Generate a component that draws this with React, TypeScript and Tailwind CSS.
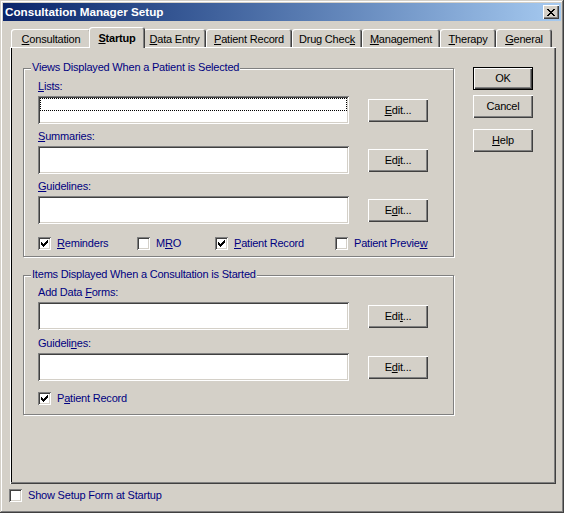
import type { ReactNode } from "react";

// classic win2000 bevels
const raised = "shadow-[inset_1px_1px_#fff,inset_-1px_-1px_#404040,inset_-2px_-2px_#808080]";
const sunken =
  "shadow-[inset_1px_1px_#808080,inset_-1px_-1px_#fff,inset_2px_2px_#404040,inset_-2px_-2px_#d4d0c8]";

function CheckMark() {
  return (
    <svg width="13" height="13" viewBox="0 0 13 13" shapeRendering="crispEdges" className="block">
      <path
        fill="#000"
        d="M3 5h1v3H3zM4 6h1v3H4zM5 7h1v3H5zM6 6h1v3H6zM7 5h1v3H7zM8 4h1v3H8zM9 3h1v3H9z"
      />
    </svg>
  );
}

function CheckBox({ checked, children, className = "" }: { checked?: boolean; children: ReactNode; className?: string }) {
  return (
    <div className={`flex items-center gap-[6px] ${className}`}>
      <span className={`flex h-[13px] w-[13px] shrink-0 bg-white ${sunken}`}>{checked && <CheckMark />}</span>
      <span className="leading-[13px] text-[#000080]">{children}</span>
    </div>
  );
}

function Btn({ children, isDefault }: { children: ReactNode; isDefault?: boolean }) {
  return (
    <button
      className={
        isDefault
          ? "flex h-[23px] w-[60px] items-center justify-center border border-black bg-[#d4d0c8] text-black shadow-[inset_1px_1px_#fff,inset_-1px_-1px_#404040,inset_-2px_-2px_#808080]"
          : `flex h-[23px] w-[60px] items-center justify-center bg-[#d4d0c8] text-black ${raised}`
      }
    >
      {children}
    </button>
  );
}

function Field({ label, focus, className = "", edit }: { label: ReactNode; focus?: boolean; className?: string; edit: ReactNode }) {
  return (
    <div className={`flex flex-col ${className}`}>
      <div className="h-[13px] leading-[13px] text-[#000080]">{label}</div>
      <div className="mt-[3px] flex items-center">
        <div className={`h-[28px] w-[311px] bg-white p-[2px] ${sunken}`}>
          {focus && <div className="h-[13px] border border-dotted border-black" />}
        </div>
        <div className="ml-[19px]">
          <Btn>{edit}</Btn>
        </div>
      </div>
    </div>
  );
}

function Group({ title, children, className = "" }: { title: string; children: ReactNode; className?: string }) {
  return (
    <div
      className={`relative w-[431px] border border-[#808080] shadow-[1px_1px_0_#fff,inset_1px_1px_0_#fff] ${className}`}
    >
      <span className="absolute -top-[8px] left-[7px] bg-[#d4d0c8] px-[1px] leading-[13px] text-[#000080]">
        {title}
      </span>
      {children}
    </div>
  );
}

const tabs: { w: string; label: ReactNode; selected?: boolean }[] = [
  { w: "w-[80px]", label: <><u>C</u>onsultation</> },
  { w: "w-[56px]", label: <><u>S</u>tartup</>, selected: true },
  { w: "w-[63px]", label: <><u>D</u>ata Entry</> },
  { w: "w-[86px]", label: <><u>P</u>atient Record</> },
  { w: "w-[70px]", label: <>Drug Chec<u>k</u></> },
  { w: "w-[78px]", label: <><u>M</u>anagement</> },
  { w: "w-[56px]", label: <><u>T</u>herapy</> },
  { w: "w-[56px]", label: <><u>G</u>eneral</> },
];

export default function App() {
  return (
    <div
      className="flex h-[513px] w-[564px] flex-col bg-[#d4d0c8] p-[3px] text-[11px] tracking-[-0.2px] text-black shadow-[inset_-1px_-1px_#404040,inset_1px_1px_#d4d0c8,inset_-2px_-2px_#808080,inset_2px_2px_#fff]"
      style={{ fontFamily: '"Liberation Sans", Arial, sans-serif' }}
    >
      {/* title bar */}
      <div className="flex h-[18px] items-center justify-between bg-linear-to-r from-[#0a246a] to-[#a6caf0] pl-[2px] pr-[2px]">
        <span className="text-[11.7px] font-bold tracking-normal text-white">Consultation Manager Setup</span>
        <button className={`flex h-[14px] w-[16px] items-center justify-center bg-[#d4d0c8] ${raised}`}>
          <svg width="8" height="7" viewBox="0 0 8 7" shapeRendering="crispEdges" className="block">
            <path
              fill="#000"
              d="M0 0h2v1H0zM6 0h2v1H6zM1 1h2v1H1zM5 1h2v1H5zM2 2h4v1H2zM3 3h2v1H3zM2 4h4v1H2zM1 5h2v1H1zM5 5h2v1H5zM0 6h2v1H0zM6 6h2v1H6z"
            />
          </svg>
        </button>
      </div>

      {/* tabs */}
      <div className="ml-[8px] mt-[6px] flex h-[20px] items-end">
        {tabs.map((t, i) =>
          t.selected ? (
            <div
              key={i}
              className={`relative z-10 -mx-[2px] -mb-[1px] flex h-[21px] ${t.w} shrink-0 items-start justify-center rounded-t-[3px] bg-[#d4d0c8] pt-[3px] font-bold shadow-[inset_1px_1px_#fff,inset_-1px_0_#404040,inset_-2px_0_#808080]`}
            >
              {t.label}
            </div>
          ) : (
            <div
              key={i}
              className={`flex h-[18px] ${t.w} shrink-0 items-start justify-center rounded-t-[3px] bg-[#d4d0c8] pt-[2px] shadow-[inset_1px_1px_#fff,inset_-1px_0_#404040,inset_-2px_0_#808080]`}
            >
              {t.label}
            </div>
          )
        )}
      </div>

      {/* page */}
      <div className="ml-[7px] flex h-[437px] w-[546px] pl-[13px] pt-[20px] shadow-[inset_1px_1px_#fff,inset_-1px_-1px_#404040,inset_-2px_-2px_#808080,inset_2px_0_#000]">
        <div className="flex flex-col">
          <Group title="Views Displayed When a Patient is Selected" className="mt-[1px] pb-[6px] pl-[14px] pt-[11px]">
            <Field label={<><u>L</u>ists:</>} focus edit={<><u>E</u>dit...</>} />
            <Field label={<><u>S</u>ummaries:</>} className="mt-[6px]" edit={<>Ed<u>i</u>t...</>} />
            <Field label={<><u>G</u>uidelines:</>} className="mt-[6px]" edit={<>E<u>d</u>it...</>} />
            <div className="mt-[13px] flex">
              <CheckBox checked className="w-[99px]">
                <u>R</u>eminders
              </CheckBox>
              <CheckBox className="w-[78px]">
                M<u>R</u>O
              </CheckBox>
              <CheckBox checked className="w-[120px]">
                <u>P</u>atient Record
              </CheckBox>
              <CheckBox>
                Patient Previe<u>w</u>
              </CheckBox>
            </div>
          </Group>

          <Group title="Items Displayed When a Consultation is Started" className="mt-[18px] pb-[9px] pl-[14px] pt-[10px]">
            <Field label={<>Add Data <u>F</u>orms:</>} edit={<>Edi<u>t</u>...</>} />
            <Field label={<>Guideli<u>n</u>es:</>} className="mt-[7px]" edit={<>E<u>d</u>it...</>} />
            <CheckBox checked className="mt-[11px]">
              P<u>a</u>tient Record
            </CheckBox>
          </Group>
        </div>

        <div className="ml-[19px] flex flex-col">
          <Btn isDefault>OK</Btn>
          <div className="mt-[5px]">
            <Btn>Cancel</Btn>
          </div>
          <div className="mt-[11px]">
            <Btn>
              <u>H</u>elp
            </Btn>
          </div>
        </div>
      </div>

      <CheckBox className="ml-[6px] mt-[5px]">Show Setup Form at Startup</CheckBox>
    </div>
  );
}
